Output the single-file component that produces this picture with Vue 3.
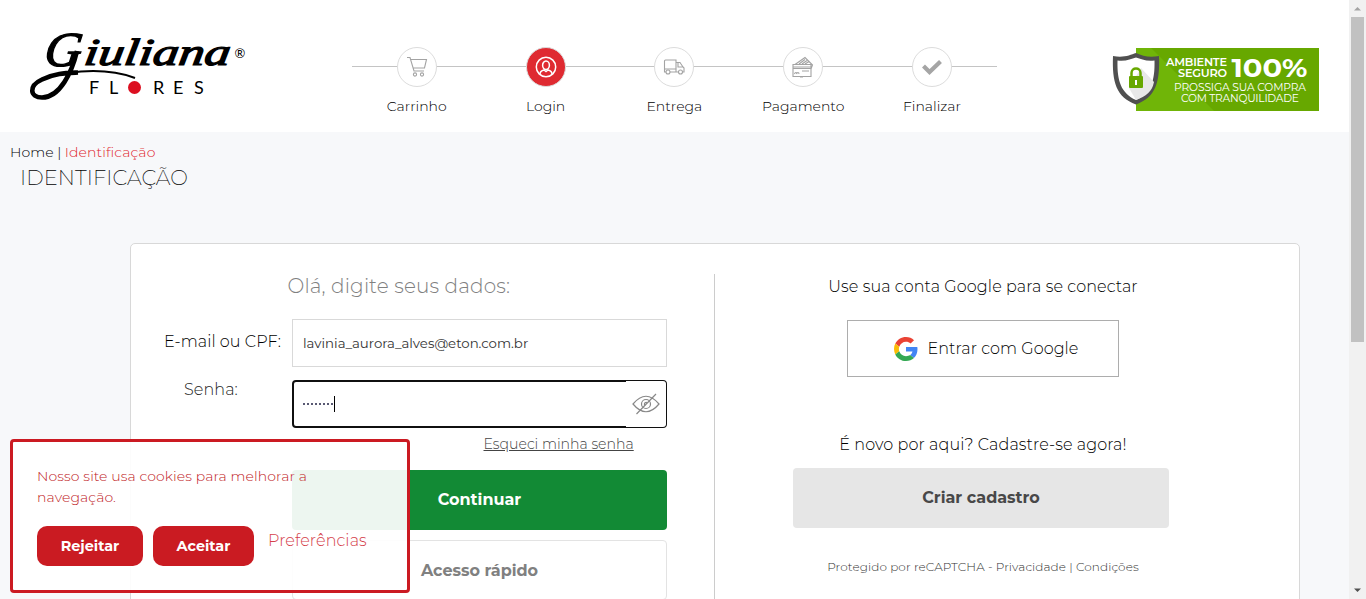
<script setup>
const steps = [
  { label: 'Carrinho', icon: 'cart' },
  { label: 'Login', icon: 'user' },
  { label: 'Entrega', icon: 'truck' },
  { label: 'Pagamento', icon: 'card' },
  { label: 'Finalizar', icon: 'check' }
]
</script>

<template>
  <div class="window">
    <div class="page">
      <header class="header">
        <svg class="logo" width="220" height="94" viewBox="28 10 220 94">
          <g class="script" transform="translate(0 65) skewX(-8)">
            <text x="43" y="0.500" font-size="49" textLength="37" lengthAdjust="spacingAndGlyphs">G</text>
            <text x="83" y="0" font-size="38" textLength="146" lengthAdjust="spacingAndGlyphs" class="bolder">iuliana</text>
          </g>
          <path d="M77 51C72 72 60 97.500 42 97.500C30 97.500 28 86 42 79.500C55 73 67 73 78 72.500" fill="none" stroke="#000" stroke-width="4.600" />
          <path d="M68 73C96 69 116 71 135 78" fill="none" stroke="#000" stroke-width="2" />
          <g class="sub" font-size="18">
            <text x="89" y="94">F</text><text x="109" y="94">L</text>
            <text x="153" y="94">R</text><text x="173" y="94">E</text><text x="194" y="94">S</text>
          </g>
          <circle cx="134.500" cy="87.500" r="6.500" fill="#dc0f20" />
          <text x="234.500" y="58" font-size="13" class="sub">®</text>
        </svg>

        <nav class="steps">
          <div v-for="s in steps" :key="s.label" class="step">
            <div class="dot" :class="{ active: s.icon === 'user' }">
              <svg v-if="s.icon === 'cart'" width="22" height="22" viewBox="0 0 22 22" class="line">
                <path d="M1 1.500H4L8 15H18M5 3.500H20.500L18.500 12H7.300" />
                <circle cx="9" cy="18.500" r="1.600" /><circle cx="16" cy="18.500" r="1.600" />
              </svg>
              <svg v-else-if="s.icon === 'user'" width="22" height="22" viewBox="0 0 22 22" class="line light">
                <circle cx="11" cy="11" r="9.700" /><ellipse cx="11" cy="9.300" rx="3.400" ry="4.200" />
                <path d="M5 18C5 15.500 7 14.500 9 14L11 15.500L13 14C15 14.500 17 15.500 17 18" />
              </svg>
              <svg v-else-if="s.icon === 'truck'" width="22" height="22" viewBox="0 0 22 22" class="line">
                <path d="M3 16H1.500V5Q1.500 4 2.500 4H13V16H7M1.500 13H13M13 6.500H17L20 11L21 12V16H20M13 16H15M15 7V11H20" />
                <circle cx="5" cy="16" r="2" /><circle cx="17.500" cy="16" r="2" />
              </svg>
              <svg v-else-if="s.icon === 'card'" width="22" height="22" viewBox="0 0 22 22" class="line">
                <path d="M1 8.500H19V20.500H1ZM1 11H19M1 12.500H19M3 8.500L13 1.500L20.500 9L19 13M7 8L13 3.500M10 8L15 4.500M13 8L17 5.500M10 15H17" />
                <path d="M2.500 18C3 16 5 16 5 18M4.500 18C5 16 7 16 7 18M8 21H11" />
              </svg>
              <svg v-else width="22" height="22" viewBox="0 0 22 22">
                <path d="M2.500 10L8.500 16L19.500 5.500" fill="none" stroke="#a5a5a5" stroke-width="4.200" />
              </svg>
            </div>
            <span class="step-label">{{ s.label }}</span>
          </div>
        </nav>

        <svg class="secure" width="208" height="66" viewBox="1112 46 208 66">
          <rect x="1136" y="48" width="183" height="63" fill="#67a800" />
          <path d="M1136 48H1151L1214 111H1136Z" fill="#70b508" />
          <path d="M1113 56C1124 58 1130 55 1136 53C1143 56 1149 58 1159 56C1160 82 1156 97 1136 104.500C1116 97 1112 82 1113 56Z" fill="#505050" />
          <path d="M1117.500 60.500C1126 61.500 1131 59 1136 57.500C1141 59 1146 61.500 1154.500 60.500C1155 81 1151 93 1136 100C1121 93 1117 81 1117.500 60.500Z" fill="#fff" />
          <path d="M1141 68L1154 82C1152 92 1146 96 1136 100L1129 88Z" fill="#e8e8e8" />
          <rect x="1129" y="76" width="14" height="12" rx="1" fill="#67a800" />
          <path d="M1131.500 77V73C1131.500 67 1140.500 67 1140.500 73V77" fill="none" stroke="#67a800" stroke-width="2.500" />
          <path d="M1135 80H1137V85H1135Z" fill="#fff" />
          <g fill="#fff" class="badge">
            <text x="1166" y="65.500" font-size="11.300" font-weight="600" textLength="61">AMBIENTE</text>
            <text x="1178" y="76.500" font-size="11.300" font-weight="600" textLength="49">SEGURO</text>
            <text x="1231.500" y="77" font-size="26" font-weight="700" textLength="76" lengthAdjust="spacingAndGlyphs">100%</text>
            <text x="1174" y="91" font-size="10.700" font-weight="400" textLength="132">PROSSIGA SUA COMPRA</text>
            <text x="1181" y="101.500" font-size="10.700" font-weight="400" textLength="118">COM TRANQUILIDADE</text>
          </g>
        </svg>
      </header>

      <div class="crumbs">
        <span>Home</span><i class="bar">|</i><span class="here">Identificação</span>
      </div>
      <h1 class="title">IDENTIFICAÇÃO</h1>

      <main class="card">
        <section class="left">
          <h2 class="hello">Olá, digite seus dados:</h2>
          <div class="row">
            <label class="label">E-mail ou CPF:</label>
            <div class="field"><span>lavinia_aurora_alves@eton.com.br</span></div>
          </div>
          <div class="row">
            <label class="label pass">Senha:</label>
            <div class="field focus">
              <i v-for="n in 8" :key="n" class="mask"></i><i class="caret"></i>
              <div class="eye">
                <svg width="28" height="22" viewBox="0 0 28 22" class="line gray">
                  <path d="M1 11Q14-4.500 27 11Q14 26.500 1 11ZM4.500 21L24 1" />
                  <circle cx="14" cy="11" r="4.500" /><path d="M12.500 12.500V10.500Q13 9 15 9.500" />
                </svg>
              </div>
            </div>
          </div>
          <a class="forgot">Esqueci minha senha</a>
          <button class="btn go">Continuar</button>
          <button class="btn quick">Acesso rápido</button>
        </section>

        <section class="right">
          <p class="text">Use sua conta Google para se conectar</p>
          <button class="google">
            <svg width="24" height="24" viewBox="0 0 48 48">
              <path fill="#EA4335" d="M24 9.500c3.540 0 6.710 1.220 9.210 3.600l6.850-6.850C35.900 2.380 30.470 0 24 0 14.620 0 6.510 5.380 2.560 13.220l7.980 6.190C12.430 13.720 17.740 9.500 24 9.500z" />
              <path fill="#4285F4" d="M46.980 24.550c0-1.570-.15-3.090-.38-4.550H24v9.020h12.940c-.58 2.960-2.260 5.480-4.780 7.180l7.730 6c4.510-4.180 7.090-10.360 7.090-17.650z" />
              <path fill="#FBBC05" d="M10.530 28.590c-.48-1.450-.76-2.990-.76-4.590s.27-3.140.76-4.590l-7.980-6.190C.92 16.460 0 20.120 0 24c0 3.880.92 7.540 2.560 10.780l7.970-6.190z" />
              <path fill="#34A853" d="M24 48c6.480 0 11.930-2.130 15.890-5.810l-7.730-6c-2.150 1.450-4.920 2.300-8.160 2.300-6.260 0-11.570-4.220-13.470-9.910l-7.980 6.190C6.510 42.620 14.620 48 24 48z" />
            </svg>
            <span>Entrar com Google</span>
          </button>
          <p class="text new">É novo por aqui? Cadastre-se agora!</p>
          <button class="btn create">Criar cadastro</button>
          <p class="legal">Protegido por reCAPTCHA - Privacidade | Condições</p>
        </section>
      </main>

      <aside class="cookies">
        <p>Nosso site usa cookies para melhorar a<br />navegação.</p>
        <div class="actions">
          <button class="red reject">Rejeitar</button>
          <button class="red accept">Aceitar</button>
          <a class="prefs">Preferências</a>
        </div>
      </aside>
    </div>

    <div class="scroll">
      <svg width="17" height="17"><path d="M5 10.500L8.500 7L12 10.500Z" fill="#a3a3a3" /></svg>
      <div class="thumb"></div>
      <svg width="17" height="17"><path d="M5 6.500L8.500 10L12 6.500Z" fill="#505050" /></svg>
    </div>
  </div>
</template>

<style>
html, body { margin: 0; overflow: hidden; }
</style>

<style scoped>
* { box-sizing: border-box; }
.window { display: flex; width: 1366px; height: 599px; overflow: hidden; font-family: Montserrat, Inter, sans-serif; font-weight: 300; color: #000; white-space: nowrap; }
.page { position: relative; width: 1349px; height: 599px; overflow: hidden; background: #f7f8fa; }
i { font-style: normal; }
p, h1, h2 { margin: 0; font-weight: 300; }
button { font-family: inherit; border: 0; padding: 0; display: flex; align-items: center; justify-content: center; }
.header { display: flex; align-items: flex-start; height: 132px; background: #fff; }
.logo { margin: 10px 0 0 28px; }
.script { font-family: "Liberation Serif", serif; font-style: italic; stroke: #000; stroke-width: 1.3; }
.bolder { stroke-width: 1.2; }
.sub { font-family: Lato, sans-serif; font-weight: 400; }
.badge { font-family: Montserrat, Inter, sans-serif; }
.steps { display: flex; width: 645px; margin: 47px 0 0 104px; padding-left: .4px; background: linear-gradient(#c4c4c4, #c4c4c4) 0 19px / 100% 1px no-repeat; }
.step { width: 128.8px; display: flex; flex-direction: column; align-items: center; }
.dot { width: 40px; height: 40px; border: 1px solid #dcdcdc; border-radius: 50%; background: #fff; display: flex; align-items: center; justify-content: center; }
.dot.active { background: #df2a31; }
.line { fill: none; stroke: #a3a3a3; stroke-width: 1.1; }
.line.light { stroke: #fff; stroke-width: 1.5; }
.line.gray { stroke: #888; stroke-width: 1.2; }
.step-label { font-size: 14px; line-height: 20px; margin-top: 9px; }
.secure { margin: 46px 0 0 115px; }
.crumbs { display: flex; height: 20px; margin: 10px 0 0 10px; font-size: 14px; line-height: 20px; letter-spacing: .1px; }
.bar { width: 11px; text-align: center; }
.here { color: #e0242c; }
.title { height: 30px; margin: 1px 0 50px 20px; font-size: 21px; line-height: 30px; font-weight: 200; letter-spacing: .1px; }
.card { display: flex; width: 1170px; height: 420px; margin-left: 130px; padding-top: 30px; background: #fff; border: 1px solid #d8d8d8; border-radius: 5px; }
.left { width: 584px; border-right: 1px solid #ccc; padding-left: 33px; }
.hello { font-size: 20px; line-height: 24px; color: #808080; margin: 0 0 21px 123.500px; letter-spacing: .16px; }
.row { display: flex; margin-bottom: 13px; }
.label { width: 128px; font-size: 16px; line-height: 45px; letter-spacing: .08px; }
.label.pass { padding-left: 20px; line-height: 20px; color: #222; }
.field { position: relative; display: flex; align-items: center; width: 375px; height: 48px; padding-left: 10px; border: 1px solid #d9d9d9; font-size: 13.300px; font-weight: 400; color: #333; background: #fff; }
.field.focus { border: 2px solid #101010; border-radius: 4px; padding-left: 9px; }
.mask { width: 2px; height: 2px; margin-right: 2px; background: #224; border-radius: 1px; }
.caret { width: 1px; height: 16px; background: #000; margin-left: -1px; }
.eye { position: absolute; right: -1px; top: -1px; width: 40px; height: 46px; display: flex; align-items: center; justify-content: center; background: #fff; border-radius: 0 3px 3px 0; }
.forgot { display: block; height: 18px; margin: -6px 0 17px 319.500px; font-size: 14.100px; line-height: 18px; color: #444; text-decoration: underline; }
.btn { width: 375px; height: 60px; margin-left: 128px; padding-bottom: 2px; border-radius: 4px; font-size: 16px; font-weight: 700; }
.go { background: #128a35; color: #fff; margin-bottom: 10px; }
.quick { padding-bottom: 0; border: 1px solid #e3e3e3; background: #fff; color: #808080; }
.right { width: 536px; display: flex; flex-direction: column; align-items: center; }
.text { font-size: 16px; line-height: 25px; letter-spacing: .1px; }
.google { width: 272px; height: 57px; gap: 10px; margin-top: 21px; padding-left: 6px; border: 1px solid #adadad; background: #fff; font-size: 16px; font-weight: 300; color: #000; letter-spacing: .06px; }
.new { margin-top: 55px; }
.create { width: 376px; margin: 11px 0 0 -4px; background: #e6e6e6; color: #484848; }
.legal { margin-top: 29px; font-size: 12px; line-height: 20px; color: #333; letter-spacing: .1px; }
.cookies { position: absolute; left: 10px; top: 439px; width: 400px; height: 154px; padding: 24px 24px 0; border: 3px solid #cb1a22; border-radius: 4px; background: rgba(255, 255, 255, .925); font-size: 14px; line-height: 21px; color: #c01a24; letter-spacing: .1px; }
.actions { display: flex; margin-top: 18px; }
.red { height: 40px; border-radius: 10px; background: #ca1b22; color: #fff; font-size: 14.400px; font-weight: 700; }
.reject { width: 106px; margin-right: 10px; }
.accept { width: 101px; margin-right: 14px; }
.prefs { font-size: 16px; line-height: 29px; color: #d5404a; }
.scroll { display: flex; flex-direction: column; align-items: center; justify-content: space-between; width: 17px; height: 599px; background: #f1f1f1; }
.thumb { width: 13px; height: 325px; margin-bottom: 240px; background: #c1c1c1; }
</style>
